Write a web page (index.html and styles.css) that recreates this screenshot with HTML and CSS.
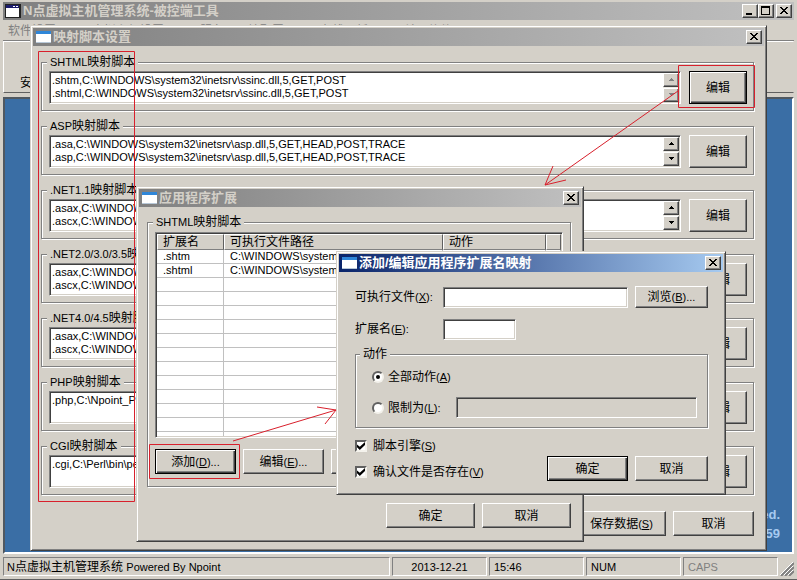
FILE: index.html
```html
<!DOCTYPE html>
<html lang="zh-CN">
<head>
<meta charset="utf-8">
<title>N点虚拟主机管理系统-被控端工具</title>
<link rel="stylesheet" href="styles.css">
</head>
<body>
<svg class="defs" aria-hidden="true">
  <symbol id="app" viewBox="0 0 16 16"><rect x="1" y="2" width="15" height="12" fill="#fff"/><rect x="1" y="2" width="15" height="3" fill="#2f86d8"/><path d="M1 13.5h15" stroke="#b8c8d8"/></symbol>
  <symbol id="mainapp" viewBox="0 0 16 16"><path d="M0 1h16v14H0z" fill="#222"/><path d="M1 5h13v9H1z" fill="#fff"/><path d="M1 2h13v3H1z" fill="#1c1c6c"/><path d="M8 3.5h2M11 3.5h2" stroke="#fff"/></symbol>
  <symbol id="x" viewBox="0 0 12 10"><path d="M2 1h2v1h1v1h2V2h1V1h2v1H9v1H8v1H7v1h1v1h1v1h1v1H8V7H7V6H5v1H4v1H2V7h1V6h1V5h1V4H4V3H3V2H2z"/></symbol>
  <symbol id="up" viewBox="0 0 7 4"><path d="M3 0h1v1h1v1h1v1H1V2h1V1h1z"/></symbol>
  <symbol id="down" viewBox="0 0 7 4"><path d="M1 0h5v1H5v1H4v1H3V2H2V1H1z"/></symbol>
</svg>

<main class="app">
  <header class="title">
    <svg class="icon"><use href="#mainapp"/></svg>
    <h1>N点虚拟主机管理系统-被控端工具</h1>
    <div class="pair">
      <button class="cap" aria-label="最小化"><svg viewBox="0 0 12 10"><path d="M2 7h6v2H2z"/></svg></button>
      <button class="cap" aria-label="最大化"><svg viewBox="0 0 12 10"><path fill-rule="evenodd" d="M1 0h9v9H1zM2 2v6h7V2z"/></svg></button>
    </div>
    <button class="cap" aria-label="关闭"><svg><use href="#x"/></svg></button>
  </header>
  <nav class="menu"><a href="#">软件设置</a><a href="#">虚拟主机设置</a><a href="#">服务器环境配置</a><a href="#">在线更新</a><a href="#">关于软件</a></nav>
  <div class="toolbar"><button>安装</button></div>
  <section class="client"><p>All Rights Reserved.</p><p>QQ:59</p></section>
  <footer class="status">
    <span class="wide"><i class="en">N</i>点虚拟主机管理系统 <i class="en">Powered By Npoint</i></span>
    <span class="date en">2013-12-21</span><span class="en">15:46</span><span class="en">NUM</span><span class="en off">CAPS</span>
    <svg class="grip" viewBox="0 0 14 14"><path d="M1 14 14 1M5 14l9-9M9 14l5-5" stroke="#808080" stroke-width="2"/><path d="M0 13 13 0M4 13l9-9M8 13l5-5" stroke="#fff"/></svg>
  </footer>
</main>

<section class="dialog scripts" aria-label="映射脚本设置">
  <header class="title"><svg class="icon"><use href="#app"/></svg><h2>映射脚本设置</h2><button class="cap" aria-label="关闭"><svg><use href="#x"/></svg></button></header>
  <form class="body">
    <fieldset><legend><i class="en">SHTML</i>映射脚本</legend><div class="row">
      <div class="memo disabled"><textarea aria-label="SHTML映射脚本" wrap="off">.shtm,C:\WINDOWS\system32\inetsrv\ssinc.dll,5,GET,POST
.shtml,C:\WINDOWS\system32\inetsrv\ssinc.dll,5,GET,POST</textarea><div class="bar"><button type="button" aria-label="向上"><svg><use href="#up"/></svg></button><button type="button" aria-label="向下"><svg><use href="#down"/></svg></button></div></div>
      <button type="button" class="btn default">编辑</button></div></fieldset>
    <fieldset><legend><i class="en">ASP</i>映射脚本</legend><div class="row">
      <div class="memo"><textarea aria-label="ASP映射脚本" wrap="off">.asa,C:\WINDOWS\system32\inetsrv\asp.dll,5,GET,HEAD,POST,TRACE
.asp,C:\WINDOWS\system32\inetsrv\asp.dll,5,GET,HEAD,POST,TRACE</textarea><div class="bar"><button type="button" aria-label="向上"><svg><use href="#up"/></svg></button><button type="button" aria-label="向下"><svg><use href="#down"/></svg></button></div></div>
      <button type="button" class="btn">编辑</button></div></fieldset>
    <fieldset><legend><i class="en">.NET1.1</i>映射脚本</legend><div class="row">
      <div class="memo"><textarea aria-label=".NET1.1映射脚本" wrap="off">.asax,C:\WINDOWS
.ascx,C:\WINDOWS</textarea><div class="bar"><button type="button" aria-label="向上"><svg><use href="#up"/></svg></button><button type="button" aria-label="向下"><svg><use href="#down"/></svg></button></div></div>
      <button type="button" class="btn">编辑</button></div></fieldset>
    <fieldset><legend><i class="en">.NET2.0/3.0/3.5</i>映射脚本</legend><div class="row">
      <div class="memo"><textarea aria-label=".NET2.0/3.0/3.5映射脚本" wrap="off">.asax,C:\WINDOWS
.ascx,C:\WINDOWS</textarea></div>
      <button type="button" class="btn">编辑</button></div></fieldset>
    <fieldset><legend><i class="en">.NET4.0/4.5</i>映射脚本</legend><div class="row">
      <div class="memo"><textarea aria-label=".NET4.0/4.5映射脚本" wrap="off">.asax,C:\WINDOWS
.ascx,C:\WINDOWS</textarea></div>
      <button type="button" class="btn">编辑</button></div></fieldset>
    <fieldset><legend><i class="en">PHP</i>映射脚本</legend><div class="row">
      <div class="memo"><textarea aria-label="PHP映射脚本" wrap="off">.php,C:\Npoint_PHP</textarea></div>
      <button type="button" class="btn">编辑</button></div></fieldset>
    <fieldset><legend><i class="en">CGI</i>映射脚本</legend><div class="row">
      <div class="memo"><textarea aria-label="CGI映射脚本" wrap="off">.cgi,C:\Perl\bin\perl.exe</textarea></div>
      <button type="button" class="btn">编辑</button></div></fieldset>
    <div class="actions"><button type="button" class="btn save">保存数据<i class="en">(<u>S</u>)</i></button><button type="button" class="btn">取消</button></div>
  </form>
</section>

<section class="dialog extensions" aria-label="应用程序扩展">
  <header class="title"><svg class="icon"><use href="#app"/></svg><h2>应用程序扩展</h2><button class="cap" aria-label="关闭"><svg><use href="#x"/></svg></button></header>
  <form class="body">
    <fieldset><legend><i class="en">SHTML</i>映射脚本</legend>
      <div class="list"><table>
        <colgroup><col class="c1"><col class="c2"><col class="c3"><col></colgroup>
        <thead><tr><th>扩展名</th><th>可执行文件路径</th><th>动作</th><th></th></tr></thead>
        <tbody>
          <tr><td>.shtm</td><td>C:\WINDOWS\system32\inetsrv\ssinc.dll</td><td></td><td></td></tr>
          <tr><td>.shtml</td><td>C:\WINDOWS\system32\inetsrv\ssinc.dll</td><td></td><td></td></tr>
          <tr><td></td><td></td><td></td><td></td></tr><tr><td></td><td></td><td></td><td></td></tr>
          <tr><td></td><td></td><td></td><td></td></tr><tr><td></td><td></td><td></td><td></td></tr>
          <tr><td></td><td></td><td></td><td></td></tr><tr><td></td><td></td><td></td><td></td></tr>
          <tr><td></td><td></td><td></td><td></td></tr><tr><td></td><td></td><td></td><td></td></tr>
          <tr><td></td><td></td><td></td><td></td></tr><tr><td></td><td></td><td></td><td></td></tr>
          <tr><td></td><td></td><td></td><td></td></tr><tr><td></td><td></td><td></td><td></td></tr>
        </tbody>
      </table></div>
      <div class="tools"><button type="button" class="btn default">添加<i class="en">(<u>D</u>)...</i></button><button type="button" class="btn">编辑<i class="en">(<u>E</u>)...</i></button><button type="button" class="btn">删除</button></div>
    </fieldset>
    <div class="actions"><button type="button" class="btn">确定</button><button type="button" class="btn">取消</button></div>
  </form>
</section>

<section class="dialog mapping" aria-label="添加/编辑应用程序扩展名映射">
  <header class="title active"><svg class="icon"><use href="#app"/></svg><h2>添加/编辑应用程序扩展名映射</h2><button class="cap" aria-label="关闭"><svg><use href="#x"/></svg></button></header>
  <form class="body">
    <div class="field"><label for="exe">可执行文件<i class="en">(<u>X</u>):</i></label><input id="exe" class="text grow" type="text"><button type="button" class="btn">浏览<i class="en">(<u>B</u>)...</i></button></div>
    <div class="field"><label for="ext">扩展名<i class="en">(<u>E</u>):</i></label><input id="ext" class="text short" type="text"></div>
    <fieldset><legend>动作</legend>
      <div class="option"><input type="radio" name="verb" id="all" checked><label for="all">全部动作<i class="en">(<u>A</u>)</i></label></div>
      <div class="option limit"><input type="radio" name="verb" id="lim"><label for="lim">限制为<i class="en">(<u>L</u>):</i></label><input class="text grow" type="text" aria-label="限制为" disabled></div>
    </fieldset>
    <div class="bottom">
      <div class="checks">
        <div class="option"><input type="checkbox" id="eng" checked><label for="eng">脚本引擎<i class="en">(<u>S</u>)</i></label></div>
        <div class="option"><input type="checkbox" id="exist" checked><label for="exist">确认文件是否存在<i class="en">(<u>V</u>)</i></label></div>
      </div>
      <button type="button" class="btn default">确定</button><button type="button" class="btn">取消</button>
    </div>
  </form>
</section>

<svg class="marks" width="797" height="580" viewBox="0 0 797 580" aria-hidden="true">
  <path d="M38.500 51.500h96v450h-96zM678.500 65.500h76v42h-76zM149.500 444.500h90v34h-90z"/>
  <path d="M678 91 545 185M553 166l-8 19 21-5M233 441l103-31M317 407l19 3-11 14"/>
</svg>
</body>
</html>
```
FILE: styles.css
```css
* { box-sizing: border-box; }
body {
  margin: 0;
  min-height: 100vh;
  overflow: hidden;
  position: relative;
  background: #d4d0c8;
  color: #000;
  font: 12px/14px "Liberation Sans", "Noto Sans CJK SC", sans-serif;
}
button, input, textarea { font: inherit; color: inherit; margin: 0; border-radius: 0; }
h1, h2, p { margin: 0; }
.defs { position: absolute; width: 0; height: 0; }
.en { font-size: 11px; font-style: normal; }

/* Main window */
.app { display: flex; flex-direction: column; height: 100vh; padding: 2px 3px 1px; border-bottom: 1px solid #606060; }
.title {
  display: flex;
  align-items: center;
  gap: 2px;
  height: 18px;
  flex: none;
  padding: 0 2px;
  background: linear-gradient(90deg, #808080, #c0c0c0);
  color: #d4d0c8;
}
.title.active { background: linear-gradient(90deg, #0a246a, #a6caf0); color: #fff; }
.title h1, .title h2 { flex: 1; font-size: 13px; line-height: 18px; font-weight: bold; white-space: nowrap; }
.icon { width: 16px; height: 16px; flex: none; }
.pair { display: flex; }
.cap {
  display: flex;
  width: 16px;
  height: 14px;
  padding: 1px;
  background: #d4d0c8;
  border: 1px solid;
  border-color: #fff #404040 #404040 #fff;
  box-shadow: inset -1px -1px #808080;
  color: #000;
}
.cap svg { width: 12px; height: 10px; }
.menu { display: flex; gap: 36px; height: 21px; flex: none; padding: 2px 5px; border-bottom: 1px solid #808080; }
.menu a { color: #808080; text-decoration: none; line-height: 18px; }
.toolbar { height: 52px; flex: none; padding: 34px 16px 0; border: 1px solid; border-color: #fff #d4d0c8 #606060 #fff; }
.toolbar button { padding: 0; border: 0; background: none; }
.client {
  flex: 1;
  margin-top: 4px;
  padding: 0 12px 9px;
  display: flex;
  flex-direction: column;
  justify-content: flex-end;
  background: #3a6ea5;
  border: 2px solid;
  border-color: #505860 #fff #fff #505860;
  color: #a6caf0;
  font-size: 13px;
  line-height: 19px;
  font-weight: bold;
  text-align: right;
}
.status { display: flex; gap: 2px; height: 24px; flex: none; padding: 3px 0 2px; }
.status span { width: 95px; padding: 0 4px; line-height: 18px; border: 1px solid; border-color: #808080 #fff #fff #808080; }
.status .wide { flex: 1; padding: 0 3px; }
.status .date { text-align: center; }
.status .off { color: #808080; }
.grip { width: 14px; height: 14px; align-self: flex-end; }

/* Dialogs */
.dialog {
  position: absolute;
  padding: 2px;
  background: #d4d0c8;
  border: 1px solid;
  border-color: #d4d0c8 #404040 #404040 #d4d0c8;
  box-shadow: inset 1px 1px #fff, inset -1px -1px #808080;
}
.scripts { left: 30px; top: 25px; width: 737px; padding-bottom: 14px; }
.extensions { left: 136px; top: 186px; width: 448px; padding-bottom: 13px; }
.mapping { left: 336px; top: 251px; width: 390px; padding-bottom: 13px; }

fieldset {
  min-width: 0;
  margin: 0;
  padding: 2px 6px 6px 7px;
  border: 1px solid #808080;
  box-shadow: 1px 1px #fff, inset 1px 1px #fff;
}
legend { margin-left: -2px; padding: 0 3px; height: 14px; background: #d4d0c8; white-space: nowrap; }
.btn {
  height: 25px;
  padding: 0;
  background: #d4d0c8;
  border: 1px solid;
  border-color: #fff #404040 #404040 #fff;
  box-shadow: inset -1px -1px #808080;
  white-space: nowrap;
}
.btn.default { border-color: #000; box-shadow: inset 1px 1px #fff, inset -1px -1px #404040, inset -2px -2px #808080; }
.actions { display: flex; justify-content: flex-end; gap: 7px; }

.scripts .body { display: flex; flex-direction: column; gap: 8px; padding: 9px 10px 0 8px; }
.scripts .row { display: flex; gap: 8px; }
.scripts .row .btn { width: 58px; height: 33px; }
.scripts .actions { margin-top: 8px; }
.scripts .actions .btn { width: 81px; }
.scripts .actions .save { width: 89px; }

.memo, .text, .list {
  background: #fff;
  border: 1px solid;
  border-color: #808080 #fff #fff #808080;
  box-shadow: inset 1px 1px #404040, inset -1px -1px #d4d0c8;
}
.memo { display: flex; flex: 1; height: 33px; padding: 1px; }
.memo textarea {
  flex: 1;
  min-width: 0;
  padding: 1px;
  border: 0;
  outline: 0;
  resize: none;
  overflow: hidden;
  background: none;
  font-size: 11px;
  line-height: 13px;
}
.bar { display: flex; flex-direction: column; width: 16px; background: #eceae4; justify-content: space-between; }
.bar button {
  display: grid;
  place-items: center;
  height: 14px;
  padding: 0;
  background: #d4d0c8;
  border: 1px solid;
  border-color: #fff #404040 #404040 #fff;
  box-shadow: inset -1px -1px #808080;
}
.bar svg { width: 7px; height: 4px; }
.disabled .bar svg { fill: #808080; }

.extensions .body { padding: 8px 10px 0 8px; }
.extensions fieldset { padding: 3px 7px 12px; }
.list { height: 206px; padding: 1px; overflow: clip; overflow-clip-margin: content-box; }
table { width: 100%; table-layout: fixed; border-collapse: separate; border-spacing: 0; }
.c1 { width: 67px; }
.c2 { width: 219px; }
.c3 { width: 103px; }
th {
  height: 16px;
  padding: 0 5px;
  text-align: left;
  font-weight: normal;
  background: #d4d0c8;
  border: 1px solid;
  border-color: #fff #606060 #808080 #fff;
}
td {
  height: 14px;
  padding: 0 6px;
  font-size: 11px;
  line-height: 13px;
  white-space: nowrap;
  overflow: hidden;
  border: 0 solid #c0c0c0;
  border-width: 0 1px 1px 0;
}
.tools { display: flex; gap: 7px; margin-top: 11px; }
.tools .btn { width: 81px; }
.extensions .actions { margin-top: 16px; }
.extensions .actions .btn { width: 89px; }

.mapping .body { padding: 14px 15px 0 16px; }
.field { display: flex; gap: 7px; height: 22px; align-items: center; margin-bottom: 10px; }
.field label { width: 81px; }
.text { height: 21px; min-width: 0; padding: 1px 3px; }
.text:disabled { background: #d4d0c8; }
.grow { flex: 1; }
.short { width: 73px; }
.field .btn { width: 73px; height: 22px; }
.mapping fieldset { margin-top: -3px; padding: 8px 10px 9px 6px; }
.option { display: flex; align-items: center; gap: 4px; }
.mapping fieldset .option { margin-left: 10px; height: 16px; }
.mapping fieldset .limit { height: 21px; margin-top: 12px; gap: 4px; }
.limit label { width: 64px; }
input[type=radio], input[type=checkbox] {
  appearance: none;
  flex: none;
  display: grid;
  place-items: center;
  width: 12px;
  height: 12px;
  background: #fff;
  border: 2px solid;
  border-color: #606060 #f4f2ec #f4f2ec #606060;
}
input[type=radio] { border-radius: 50%; }
input[type=radio]:checked::before { content: ""; width: 4px; height: 4px; border-radius: 50%; background: #000; }
input[type=checkbox]:checked::before {
  content: "";
  width: 8px;
  height: 8px;
  background: #000;
  clip-path: polygon(0 30%, 35% 60%, 100% 0, 100% 38%, 35% 100%, 0 65%);
}
.bottom { display: flex; gap: 7px; align-items: flex-end; margin-top: 11px; }
.bottom .btn { width: 73px; }
.bottom .btn.default { width: 81px; }
.checks { flex: 1; display: grid; gap: 12px; height: 42px; align-content: start; }
.checks .option { height: 14px; gap: 6px; }

/* Red call-outs drawn over the windows */
.marks { position: absolute; left: 0; top: 0; fill: none; stroke: #d8202c; pointer-events: none; }
```
